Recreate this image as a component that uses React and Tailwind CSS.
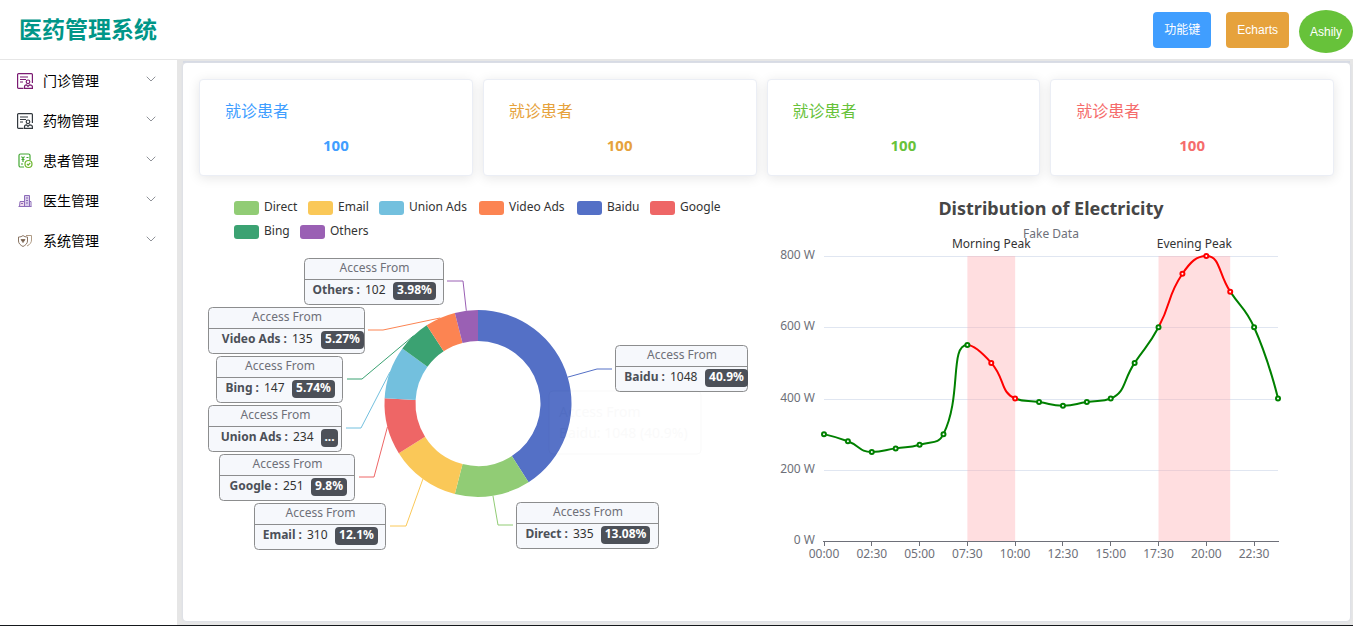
import { ChevronDown } from "lucide-react";

const menu = [
  { label: "门诊管理", icon: <RecordIcon className="w-4 h-4 text-[#7b1a72]" /> },
  { label: "药物管理", icon: <RecordIcon className="w-4 h-4 text-[#33393f]" /> },
  { label: "患者管理", icon: <PatientIcon /> },
  { label: "医生管理", icon: <HospitalIcon /> },
  { label: "系统管理", icon: <ShieldIcon /> },
];

const stats = [
  { label: "就诊患者", value: 100, color: "text-[#409eff]" },
  { label: "就诊患者", value: 100, color: "text-[#e6a23c]" },
  { label: "就诊患者", value: 100, color: "text-[#67c23a]" },
  { label: "就诊患者", value: 100, color: "text-[#f56c6c]" },
];

export default function App() {
  return (
    <div className="min-h-screen flex flex-col bg-white border-b border-[#15181c] font-['Noto_Sans','Noto_Sans_CJK_SC',sans-serif]">
      <Header />
      <div className="flex flex-1">
        <Sidebar />
        <main className="flex-1 min-w-0 flex flex-col bg-[#e6e6e6] pt-px pb-1 pl-1.5 pr-[3px]">
          <div className="flex-1 border-t-2 border-[#d6dae4]">
            <div className="h-full bg-white rounded px-4 pt-4 shadow-[0_0_2px_1px_#dcdfe6]">
              <div className="grid grid-cols-4 mb-3">
                {stats.map((s, i) => (
                  <StatCard key={i} {...s} />
                ))}
              </div>
              <div className="grid grid-cols-2 gap-px">
                <PieChart />
                <LineChart />
              </div>
            </div>
          </div>
        </main>
      </div>
    </div>
  );
}

function Header() {
  return (
    <header className="h-15 flex items-center justify-between pl-[19px] border-b border-[#e6e6e6]">
      <h1 className="text-[23px] font-bold text-[#009688]">医药管理系统</h1>
      <div className="flex items-center text-xs text-white font-['Liberation_Sans','Noto_Sans_CJK_SC',sans-serif]">
        <button className="h-9 px-[11px] mr-[15px] rounded bg-[#409eff]">功能键</button>
        <button className="h-9 px-[11px] mr-2.5 rounded bg-[#e6a23c]">Echarts</button>
        <button className="h-[43px] px-[11px] mt-1 rounded-[50%] bg-[#67c23a]">Ashily</button>
      </div>
    </header>
  );
}

function Sidebar() {
  return (
    <nav className="w-[177px] shrink-0 pt-px">
      {menu.map((m) => (
        <button key={m.label} className="w-full h-10 flex items-center pl-[17px] pr-[18px] text-sm text-black">
          <span className="w-4 mr-2.5 flex justify-center">{m.icon}</span>
          <span>{m.label}</span>
          <ChevronDown className="ml-auto mb-1 w-4 h-4 text-[#909399]" strokeWidth={1.5} />
        </button>
      ))}
    </nav>
  );
}

function StatCard({ label, value, color }) {
  return (
    <div className={`h-[97px] mr-2.5 last:mr-0 px-[25px] pt-[19px] bg-white rounded border border-[#ebeef5] shadow-[0_2px_12px_rgba(0,0,0,0.1)] ${color}`}>
      <p className="text-base leading-6">{label}</p>
      <p className="mt-2.5 text-[15px] leading-6 font-bold text-center">{value}</p>
    </div>
  );
}

const legend = [
  { name: "Direct", color: "#91cc75", x: 35, y: 13 },
  { name: "Email", color: "#fac858", x: 109, y: 13 },
  { name: "Union Ads", color: "#73c0de", x: 180, y: 13 },
  { name: "Video Ads", color: "#fc8452", x: 280, y: 13 },
  { name: "Baidu", color: "#5470c6", x: 378, y: 13 },
  { name: "Google", color: "#ee6666", x: 451, y: 13 },
  { name: "Bing", color: "#3ba272", x: 35, y: 37 },
  { name: "Others", color: "#9a60b4", x: 101, y: 37 },
];

// box: [x, y, width], line: [elbow x, end x, y], valueX / tag are offsets inside the box
const slices = [
  { name: "Baidu", value: 1048, pct: "40.9%", color: "#5470c6", box: [416, 157, 132], line: [398, 413, 181], valueX: 55, tag: [90, 43] },
  { name: "Direct", value: 335, pct: "13.08%", color: "#91cc75", box: [317, 314, 142], line: [299, 314, 337], valueX: 57, tag: [85, 49] },
  { name: "Email", value: 310, pct: "12.1%", color: "#fac858", box: [55, 315, 131], line: [207, 191, 338], valueX: 53, tag: [81, 43] },
  { name: "Google", value: 251, pct: "9.8%", color: "#ee6666", box: [20, 266, 135], line: [175, 160, 289], valueX: 64, tag: [92, 36] },
  { name: "Union Ads", value: 234, pct: "...", color: "#73c0de", box: [9, 217, 133], line: [162, 147, 240], valueX: 85, tag: [113, 17] },
  { name: "Bing", value: 147, pct: "5.74%", color: "#3ba272", box: [17, 168, 126], line: [163, 148, 191], valueX: 48, tag: [76, 43] },
  { name: "Video Ads", value: 135, pct: "5.27%", color: "#fc8452", box: [9, 119, 156], line: [184, 169, 142], valueX: 84, tag: [113, 43] },
  { name: "Others", value: 102, pct: "3.98%", color: "#9a60b4", box: [105, 70, 139], line: [264, 248, 93], valueX: 61, tag: [89, 43] },
];

const CX = 279;
const CY = 215.5;
const OUTER = 93.5;
const INNER = 62.5;

function polar(r, t) {
  const a = t * Math.PI * 2;
  return [CX + r * Math.sin(a), CY - r * Math.cos(a)];
}

function PieChart() {
  const total = slices.reduce((sum, s) => sum + s.value, 0);
  let acc = 0;
  const arcs = slices.map((s) => {
    const from = acc / total;
    acc += s.value;
    const to = acc / total;
    return {
      ...s,
      mid: polar(OUTER, (from + to) / 2),
      d: `M${polar(OUTER, from)}A${OUTER},${OUTER} 0 0 1 ${polar(OUTER, to)}L${polar(INNER, to)}A${INNER},${INNER} 0 0 0 ${polar(INNER, from)}Z`,
    };
  });

  return (
    <svg viewBox="0 0 567 420" className="w-full text-xs" role="img" aria-label="Access From">
      {legend.map((l) => (
        <g key={l.name}>
          <rect x={l.x} y={l.y} width="25" height="14" rx="3" fill={l.color} />
          <text x={l.x + 30} y={l.y + 10} fill="#333">{l.name}</text>
        </g>
      ))}
      {arcs.map((s) => (
        <path key={s.name} d={s.d} fill={s.color} />
      ))}
      {arcs.map((s) => (
        <polyline key={s.name} points={`${s.mid} ${s.line[0]},${s.line[2]} ${s.line[1]},${s.line[2]}`} fill="none" stroke={s.color} />
      ))}
      {arcs.map((s) => (
        <PieLabel key={s.name} {...s} />
      ))}
      <g opacity="0.015">
        <rect x="350" y="203" width="152" height="63" rx="4" fill="#fff" stroke="#000" />
        <text x="360" y="229" fontSize="14" fill="#000">Access From</text>
        <text x="360" y="250" fontSize="14" fill="#000">Baidu: 1048 (40.9%)</text>
      </g>
    </svg>
  );
}

function PieLabel({ name, value, pct, box, valueX, tag }) {
  const [x, y, w] = box;
  return (
    <g transform={`translate(${x} ${y})`}>
      <rect x="0.5" y="0.5" width={w} height="46" rx="4" fill="#f6f8fc" stroke="#8c8d8e" />
      <line x1="0.5" x2={w + 0.5} y1="21.5" y2="21.5" stroke="#8c8d8e" />
      <text x={w / 2 + 1} y="14" textAnchor="middle" fill="#6e7079">Access From</text>
      <text x={valueX - 5} y="36" textAnchor="end" fontWeight="bold" fill="#4c5058">{name} :</text>
      <text x={valueX} y="36" fill="#333">{value}</text>
      <rect x={tag[0]} y="24" width={tag[1]} height="18" rx="4" fill="#4c5058" />
      <text x={tag[0] + tag[1] / 2} y="36" textAnchor="middle" fontWeight="bold" fill="#fff">{pct}</text>
    </g>
  );
}

const power = [300, 280, 250, 260, 270, 300, 550, 500, 400, 390, 380, 390, 400, 500, 600, 750, 800, 700, 600, 400];
const times = ["00:00", "02:30", "05:00", "07:30", "10:00", "12:30", "15:00", "17:30", "20:00", "22:30"];
const peaks = [
  { name: "Morning Peak", from: 6, to: 8 },
  { name: "Evening Peak", from: 14, to: 17 },
];

const px = (i) => 57 + (i * 454) / 19;
const py = (v) => 353 - (v * 285) / 800;
const isPeak = (i) => peaks.some((p) => i > p.from && i <= p.to);
const clamp = (v, a, b) => Math.min(Math.max(v, Math.min(a, b)), Math.max(a, b));

// cubic segments whose control points never overshoot the neighbouring points
function smoothSegments(pts) {
  const out = [];
  let c0 = pts[0];
  for (let i = 1; i < pts.length; i++) {
    const prev = pts[i - 1];
    const cur = pts[i];
    const next = pts[i + 1];
    let c1 = cur;
    let nextC0 = cur;
    if (next) {
      const lp = Math.hypot(cur[0] - prev[0], cur[1] - prev[1]);
      const ln = Math.hypot(next[0] - cur[0], next[1] - cur[1]);
      const ratio = ln / (lp + ln);
      nextC0 = cur.map((c, k) => clamp(c + (next[k] - prev[k]) * 0.5 * ratio, next[k], c));
      c1 = cur.map((c, k) => clamp(c - ((nextC0[k] - c) * lp) / ln, prev[k], c));
      nextC0 = cur.map((c, k) => c + ((c - c1[k]) * ln) / lp);
    }
    out.push(`M${prev}C${c0} ${c1} ${cur}`);
    c0 = nextC0;
  }
  return out;
}

function LineChart() {
  const pts = power.map((v, i) => [px(i), py(v)]);

  return (
    <svg viewBox="0 0 567 420" className="w-full text-xs" role="img" aria-label="Distribution of Electricity">
      <text x="284" y="27" textAnchor="middle" fontSize="18" fontWeight="bold" fill="#464646">Distribution of Electricity</text>
      <text x="284" y="50" textAnchor="middle" fill="#6e7079">Fake Data</text>
      {[0, 200, 400, 600, 800].map((v) => (
        <g key={v}>
          {v > 0 && <line x1="57" x2="511" y1={Math.round(py(v)) + 0.5} y2={Math.round(py(v)) + 0.5} stroke="#e0e6f1" />}
          <text x="48" y={py(v) + 3} textAnchor="end" fill="#6e7079">{v} W</text>
        </g>
      ))}
      {peaks.map((p) => (
        <g key={p.name}>
          <rect x={px(p.from)} y={py(800)} width={px(p.to) - px(p.from)} height="285" fill="#ffadb1" fillOpacity="0.4" />
          <text x={(px(p.from) + px(p.to)) / 2} y="60" textAnchor="middle" fill="#333">{p.name}</text>
        </g>
      ))}
      <line x1="56" x2="512" y1="353.5" y2="353.5" stroke="#6e7079" />
      {times.map((t, i) => (
        <g key={t}>
          <line x1={Math.floor(px(i * 2)) + 0.5} x2={Math.floor(px(i * 2)) + 0.5} y1="353" y2="358" stroke="#6e7079" />
          <text x={px(i * 2)} y="370" textAnchor="middle" fill="#6e7079">{t}</text>
        </g>
      ))}
      {smoothSegments(pts).map((d, i) => (
        <path key={i} d={d} fill="none" strokeWidth="2" stroke={isPeak(i + 1) ? "red" : "green"} />
      ))}
      {pts.map(([x, y], i) => (
        <circle key={i} cx={x} cy={y} r="2" fill="#fff" strokeWidth="2" stroke={isPeak(i) ? "red" : "green"} />
      ))}
    </svg>
  );
}

function RecordIcon({ className }) {
  return (
    <svg className={className} viewBox="0 0 16 16" fill="none" stroke="currentColor" strokeWidth="1.2">
      <path d="M6.5 15.4H1.6a1 1 0 0 1-1-1V1.6a1 1 0 0 1 1-1h12.8a1 1 0 0 1 1 1V10" />
      <path d="M3 4h8M3 6.500h6M3 9h3" />
      <circle cx="11" cy="8.8" r="1.8" />
      <path d="M7.5 15.4v-1.6c0-1.3.8-2 2-2l1.500 1.500 1.500-1.500c1.500 0 2.900.7 2.900 2v1.600z" />
    </svg>
  );
}

function PatientIcon() {
  return (
    <svg className="w-4 h-4" viewBox="0 0 16 16" fill="none" stroke="#43a832" strokeWidth="1.2">
      <path d="M7 14H3.5A1.5 1.5 0 0 1 2 12.5v-10A1.5 1.5 0 0 1 3.5 1h8A1.5 1.5 0 0 1 13 2.5V7" />
      <path d="M4.5 3.5l1.5 2 1.5-2M6 5.5V9M4.5 6.5h3M9.5 4.5h2M4 11h2" />
      <circle cx="11.5" cy="11" r="3.5" stroke="#6cb52d" />
      <path d="M10 11l1.2 1.2 2-2.2" stroke="#6cb52d" />
    </svg>
  );
}

function HospitalIcon() {
  return (
    <svg className="w-4 h-4" viewBox="0 0 16 16" fill="none" stroke="#8d6cb8">
      <path d="M7.5 13.5v-11h5v11" fill="#d9cdea" />
      <path d="M3 8.5h4.5v5h-5z" fill="#f0d9ea" />
      <path d="M9 5h2M9 7.5h2M9 10h2M4 10.5h2M12.5 8.5H14v5M1.5 13.5h13" />
    </svg>
  );
}

function ShieldIcon() {
  return (
    <svg className="w-4 h-4" viewBox="0 0 16 16" fill="none" stroke="#8a7563">
      <path d="M1.5 4C3.5 4 4.8 3.5 6 2.5 7.2 3.5 8.500 4 10.5 4v4c0 2.5-2 4.2-4.5 5.5C3.5 12.2 1.5 10.5 1.5 8z" />
      <path d="M9 2.5h5.5V7c0 2.5-1.5 4.5-4.5 6" stroke="#b09c86" />
      <path d="M4 6.5h4l-2 3z" fill="#6f5a4a" />
    </svg>
  );
}
